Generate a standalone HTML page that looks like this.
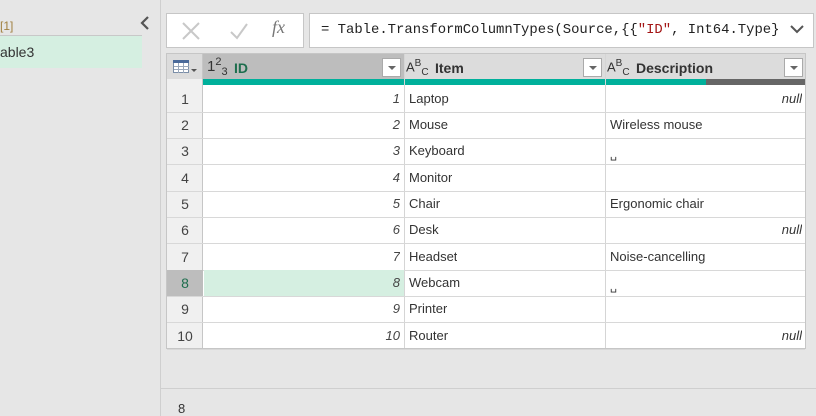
<!DOCTYPE html>
<html><head><meta charset="utf-8"><style>
*{box-sizing:border-box;margin:0;padding:0}
body{width:816px;height:416px;background:#e6e6e6;font-family:"Liberation Sans",sans-serif;position:relative;overflow:hidden;color:#333}
.a{position:absolute}
.cell{position:absolute;font-size:13px;line-height:26px;white-space:nowrap;overflow:hidden}
</style></head><body>
<div class="a" style="left:0;top:19px;font-size:12px;color:#a08040">[1]</div>
<div class="a" style="left:0;top:35px;width:142px;height:1px;background:#c8c8c8"></div>
<div class="a" style="left:0;top:36px;width:142px;height:32px;background:#d5efe1;font-size:14px;line-height:32px;color:#333">able3</div>
<svg class="a" style="left:139px;top:15px" width="12" height="16"><path d="M9 2 L3 8 L9 14" stroke="#555" stroke-width="2.2" fill="none"/></svg>
<div class="a" style="left:160px;top:0;width:1px;height:416px;background:#cfcfcf"></div>
<div class="a" style="left:166px;top:13px;width:138px;height:35px;background:#fff;border:1px solid #c6c6c6"></div>
<svg class="a" style="left:180px;top:20px" width="22" height="22"><path d="M3 3 L19 19 M19 3 L3 19" stroke="#c8c8c8" stroke-width="2" fill="none"/></svg>
<svg class="a" style="left:228px;top:20px" width="22" height="22"><path d="M3 12 L9 18 L19 4" stroke="#c8c8c8" stroke-width="2" fill="none"/></svg>
<div class="a" style="left:272px;top:17px;font-family:'Liberation Serif',serif;font-style:italic;font-size:18px;color:#777">fx</div>
<div class="a" style="left:309px;top:13px;width:505px;height:35px;background:#fff;border:1px solid #c6c6c6;font-family:'Liberation Mono',monospace;font-size:13.9px;line-height:33px;padding-left:11px;color:#222;white-space:nowrap;overflow:hidden">= Table.TransformColumnTypes(Source,{{<span style="color:#a31515">"ID"</span>, Int64.Type}</div>
<div class="a" style="left:784px;top:14px;width:28px;height:32px;background:#fff"></div>
<svg class="a" style="left:789px;top:23px" width="16" height="12"><path d="M2 3 L8 9 L14 3" stroke="#555" stroke-width="2" fill="none"/></svg>
<div class="a" style="left:166px;top:53px;width:640px;height:296px;background:#fff;border:1px solid #c6c6c6"></div>
<div class="a" style="left:167px;top:54px;width:638px;height:25px;background:#dcdcdc"></div>
<div class="a" style="left:203px;top:54px;width:201px;height:25px;background:#bdbdbd"></div>
<div class="a" style="left:167px;top:54px;width:36px;height:294px;background:#f0f0f0;border-right:1px solid #c6c6c6"></div>
<div class="a" style="left:167px;top:54px;width:36px;height:25px;background:#dcdcdc;border-right:1px solid #c6c6c6"></div>
<svg class="a" style="left:172px;top:58px" width="26" height="18"><rect x="1.5" y="2.5" width="15" height="12" fill="#fff" stroke="#7a8ea8"/><rect x="1" y="2" width="16" height="3" fill="#4a6a9a"/><path d="M6.5 5v10M11.5 5v10M2 8.5h15M2 11.5h15" stroke="#9aa8bb"/><path d="M19 11h6l-3 3z" fill="#555"/></svg>
<div class="a" style="left:203px;top:79px;width:602px;height:6px;background:#00b09b"></div>
<div class="a" style="left:706px;top:79px;width:99px;height:6px;background:#666"></div>
<div class="a" style="left:404px;top:54px;width:1px;height:294px;background:#d5d5d5"></div>
<div class="a" style="left:605px;top:54px;width:1px;height:294px;background:#d5d5d5"></div>
<div class="a" style="left:207px;top:56px;font-size:15px;color:#333">1<sup style="font-size:11px">2</sup><sub style="font-size:11px">3</sub></div>
<div class="a" style="left:234px;top:60px;font-size:14px;font-weight:bold;color:#1e6e4e">ID</div>
<div class="a" style="left:406px;top:58px;font-size:13px;color:#333">A<sup style="font-size:10px">B</sup><sub style="font-size:10px">C</sub></div>
<div class="a" style="left:435px;top:60px;font-size:14px;font-weight:bold;color:#333">Item</div>
<div class="a" style="left:607px;top:58px;font-size:13px;color:#333">A<sup style="font-size:10px">B</sup><sub style="font-size:10px">C</sub></div>
<div class="a" style="left:636px;top:60px;font-size:14px;font-weight:bold;color:#333">Description</div>
<div class="a" style="left:382px;top:58px;width:19px;height:19px;background:#fff;border:1px solid #aaa"></div>
<div class="a" style="left:583px;top:58px;width:19px;height:19px;background:#fff;border:1px solid #aaa"></div>
<div class="a" style="left:784px;top:58px;width:19px;height:19px;background:#fff;border:1px solid #aaa"></div>
<svg class="a" style="left:386px;top:64px" width="12" height="8"><path d="M2 2h8l-4 4z" fill="#666"/></svg>
<svg class="a" style="left:587px;top:64px" width="12" height="8"><path d="M2 2h8l-4 4z" fill="#666"/></svg>
<svg class="a" style="left:788px;top:64px" width="12" height="8"><path d="M2 2h8l-4 4z" fill="#666"/></svg>
<div id="rows"></div>
<script>
var d=[["Laptop","null"],["Mouse","Wireless mouse"],["Keyboard","␣"],["Monitor",""],["Chair","Ergonomic chair"],["Desk","null"],["Headset","Noise-cancelling"],["Webcam","␣"],["Printer",""],["Router","null"]];
var h="";
for(var i=0;i<10;i++){var t=85.5+i*26.35;
if(i==7){h+='<div class="a" style="left:167px;top:'+t+'px;width:36px;height:26.4px;background:#bdbdbd"></div><div class="a" style="left:204px;top:'+t+'px;width:200px;height:26.4px;background:#d5efe1"></div>';}
h+='<div class="a" style="left:167px;top:'+(t+26)+'px;width:638px;height:1px;background:#d8d8d8"></div>';
h+='<div class="cell" style="left:167px;top:'+t+'px;width:36px;text-align:center;font-size:14px;color:'+(i==7?'#1e6e4e':'#444')+'">'+(i+1)+'</div>';
h+='<div class="cell" style="left:204px;top:'+t+'px;width:196px;text-align:right;font-style:italic;color:#444">'+(i+1)+'</div>';
h+='<div class="cell" style="left:409px;top:'+t+'px;color:#333">'+d[i][0]+'</div>';
var v=d[i][1];
if(v=="null")h+='<div class="cell" style="left:606px;top:'+t+'px;width:196px;text-align:right;font-style:italic;color:#333">null</div>';
else if(v=="␣")h+='<div class="cell" style="left:610px;top:'+(t+4)+'px;font-size:11px;color:#333">␣</div>';
else h+='<div class="cell" style="left:610px;top:'+t+'px;color:#333">'+v+'</div>';}
document.getElementById("rows").innerHTML=h;
</script>
<div class="a" style="left:161px;top:388px;width:655px;height:1px;background:#cfcfcf"></div>
<div class="a" style="left:178px;top:401px;font-size:13px;color:#333">8</div>
</body></html>
